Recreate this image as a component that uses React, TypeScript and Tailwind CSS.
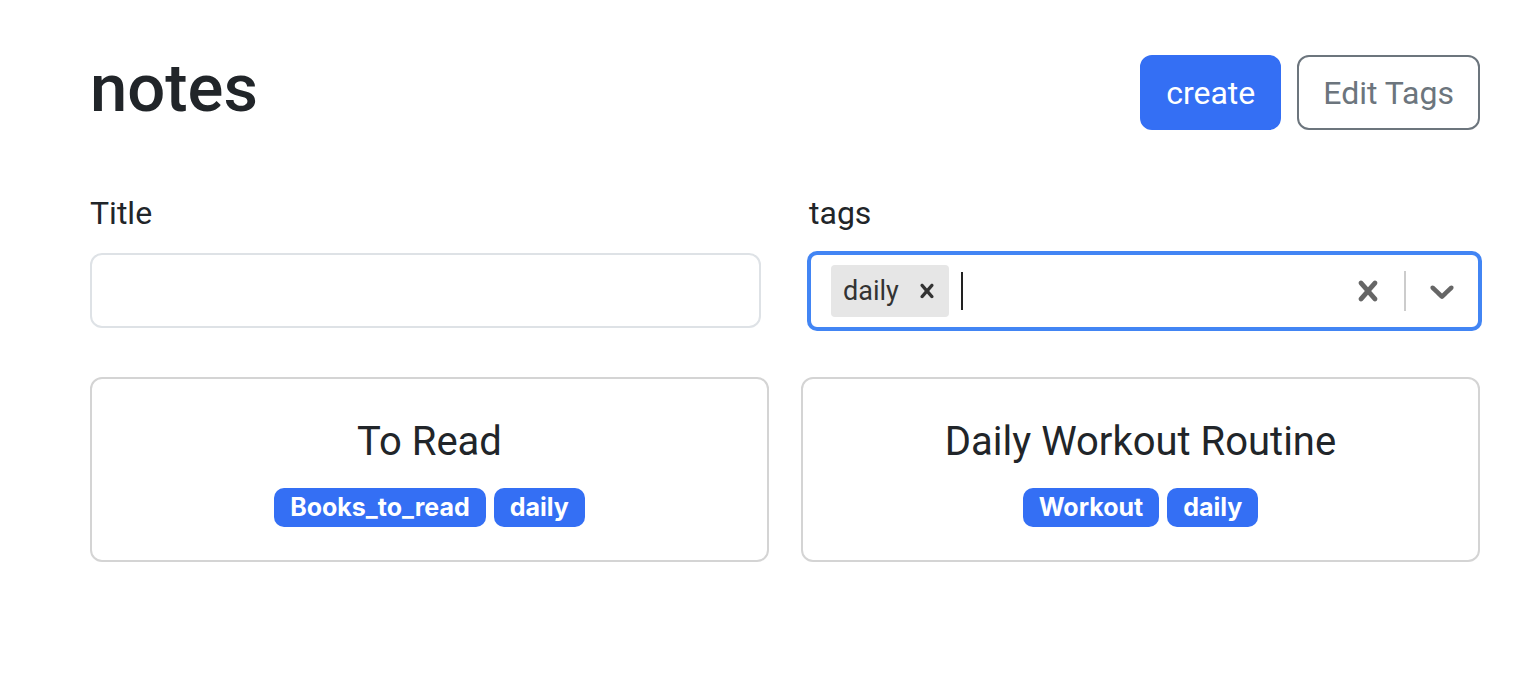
import * as React from "react";

const notes = [
  { id: "1", title: "To Read", tags: ["Books_to_read", "daily"] },
  { id: "2", title: "Daily Workout Routine", tags: ["Workout", "daily"] },
];

function ClearIcon({ className }: { className?: string }) {
  return (
    <svg viewBox="0 0 20 20" className={className} fill="currentColor" aria-hidden>
      <path d="M14.348 14.849c-0.469 0.469-1.229 0.469-1.697 0l-2.651-3.030-2.651 3.029c-0.469 0.469-1.229 0.469-1.697 0-0.469-0.469-0.469-1.229 0-1.697l2.758-3.15-2.759-3.152c-0.469-0.469-0.469-1.228 0-1.697s1.228-0.469 1.697 0l2.652 3.031 2.651-3.031c0.469-0.469 1.228-0.469 1.697 0s0.469 1.229 0 1.697l-2.758 3.152 2.758 3.15c0.469 0.469 0.469 1.229 0 1.698z" />
    </svg>
  );
}

function ChevronIcon({ className }: { className?: string }) {
  return (
    <svg viewBox="0 0 20 20" className={className} fill="currentColor" aria-hidden>
      <path d="M4.516 7.548c0.436-0.446 1.043-0.481 1.576 0l3.908 3.747 3.908-3.747c0.533-0.481 1.141-0.446 1.574 0 0.436 0.445 0.408 1.197 0 1.615-0.406 0.418-4.695 4.502-4.695 4.502-0.217 0.223-0.502 0.335-0.787 0.335s-0.57-0.112-0.789-0.335c0 0-4.287-4.084-4.695-4.502s-0.436-1.17 0-1.615z" />
    </svg>
  );
}

function TagSelect({ selected }: { selected: string[] }) {
  return (
    <div className="flex h-[76px] items-stretch rounded-[8px] border-2 border-[#4285f4] bg-white shadow-[0_0_0_2px_#4285f4]">
      <div className="flex flex-1 items-center px-[16px] py-[4px]">
        {selected.map((t) => (
          <div key={t} className="m-[4px] flex rounded-[4px] bg-[#e6e6e6]">
            <span className="py-[6px] pl-[12px] pr-[6px] text-[27px] leading-[40px] text-[#333]">{t}</span>
            <span className="flex items-center px-[8px] text-[#333]">
              <ClearIcon className="h-[28px] w-[28px]" />
            </span>
          </div>
        ))}
        <div className="ml-[8px] h-[38px] w-[2px] bg-[#222]" />
      </div>
      <div className="flex items-center">
        <div className="flex items-center p-[16px] text-[#666]">
          <ClearIcon className="h-[40px] w-[40px]" />
        </div>
        <div className="my-[16px] w-[2px] self-stretch bg-[#ccc]" />
        <div className="flex items-center p-[16px] text-[#666]">
          <ChevronIcon className="h-[40px] w-[40px]" />
        </div>
      </div>
    </div>
  );
}

function NoteCard({ title, tags }: { title: string; tags: string[] }) {
  return (
    <div className="flex flex-col items-center gap-[16px] rounded-[12px] border-2 border-[#d4d4d4] bg-white px-[32px] py-[33px]">
      <span className="text-[40px] leading-[60px] text-[#212529]">{title}</span>
      <div className="flex gap-[8px]">
        {tags.map((t) => (
          <span
            key={t}
            className="rounded-[10px] bg-[#346ff4] px-[16px] py-[7px] font-['Inter',sans-serif] text-[25px] font-bold leading-[25px] text-white"
          >
            {t}
          </span>
        ))}
      </div>
    </div>
  );
}

export default function App() {
  return (
    <div className="min-h-screen bg-white font-['Roboto',sans-serif] text-[#212529]">
      <div className="ml-[90px] w-[1390px] pt-[48px]">
        <div className="flex items-start justify-between">
          <h1 className="text-[67px] font-medium leading-[80px]">notes</h1>
          <div className="mt-[7px] flex gap-[16px]">
            <button className="h-[75px] rounded-[12px] border-2 border-[#346ff4] bg-[#346ff4] px-[24px] text-[32px] text-white">
              create
            </button>
            <button className="h-[75px] rounded-[12px] border-2 border-[#6c757d] bg-white px-[24px] text-[32px] text-[#6c757d]">
              Edit Tags
            </button>
          </div>
        </div>

        <form className="mt-[59px] grid grid-cols-2 gap-[48px]">
          <div>
            <label htmlFor="title" className="mb-[16px] block text-[32px] leading-[48px]">Title</label>
            <input
              id="title"
              className="block h-[75px] w-full rounded-[12px] border-2 border-[#dee2e6] px-[24px] text-[32px] outline-none"
            />
          </div>
          <div>
            <label className="mb-[16px] block text-[32px] leading-[48px]">tags</label>
            <TagSelect selected={["daily"]} />
          </div>
        </form>

        <div className="mt-[48px] grid grid-cols-2 gap-[32px]">
          {notes.map((n) => (
            <NoteCard key={n.id} title={n.title} tags={n.tags} />
          ))}
        </div>
      </div>
    </div>
  );
}
